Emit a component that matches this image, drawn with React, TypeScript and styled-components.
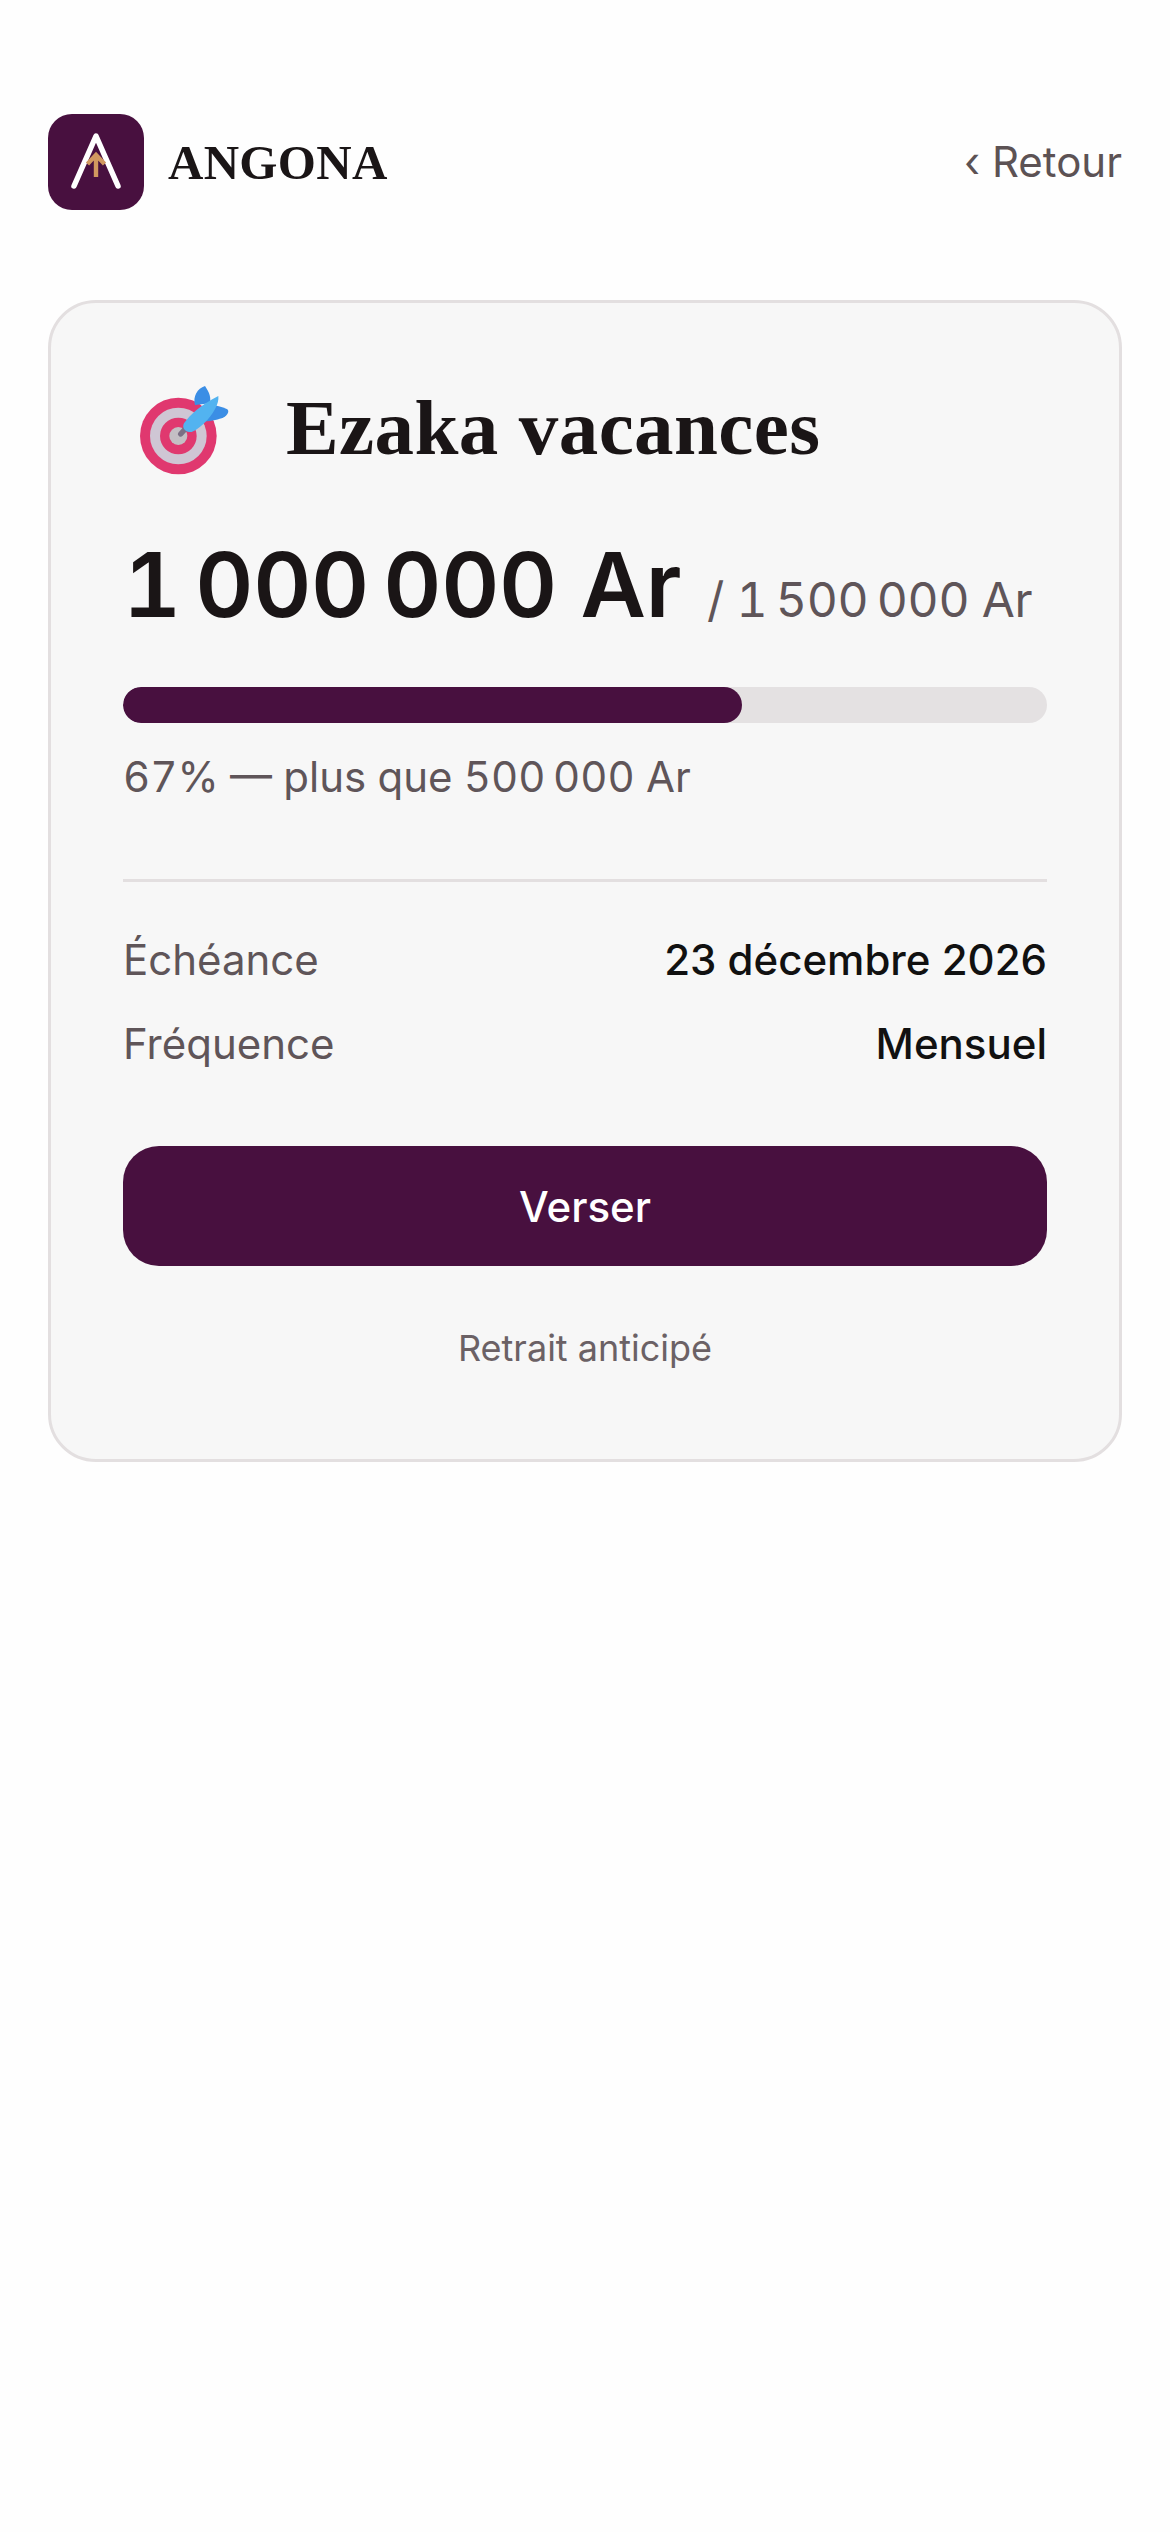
import styled, { createGlobalStyle } from "styled-components";

const NNBSP = "\u202f";

const GlobalStyle = createGlobalStyle`
  html, body {
    margin: 0;
    padding: 0;
    background: #fefefe;
  }
  body {
    font-family: Inter, "Liberation Sans", sans-serif;
    color: #1a1516;
  }
`;

const Logo = () => (
  <LogoBox>
    <svg width="96" height="96" viewBox="0 0 96 96" fill="none">
      <path d="M26 72 L48 22 L70 72" stroke="#fff" strokeWidth="5.5" strokeLinecap="round" strokeLinejoin="round" />
      <path d="M48 63 V41 M39.5 50 L48 41 L56.5 50" stroke="#d1985f" strokeWidth="4.4" />
    </svg>
  </LogoBox>
);

const TargetIcon = () => (
  <svg width="115" height="106" viewBox="39 45 345 318">
    <circle cx="205" cy="228" r="115" fill="#e0386f" />
    <circle cx="205" cy="228" r="85" fill="#cfc6d4" />
    <circle cx="205" cy="228" r="55" fill="#e0386f" />
    <circle cx="205" cy="228" r="27" fill="#c4bfc4" />
    <path d="M212 222 L245 185" stroke="#7b7085" strokeWidth="16" strokeLinecap="round" />
    <path d="M255 135 C248 110 262 85 285 78 C292 90 305 105 300 130 Z" fill="#3b8ee5" />
    <path d="M270 185 C300 185 320 180 335 175 C350 170 360 155 352 148 C335 140 318 135 300 135 Z" fill="#3b8ee5" />
    <path d="M222 190 C240 165 270 135 325 108 C328 130 310 165 280 192 C265 205 250 218 238 216 C225 215 215 203 222 190 Z" fill="#52b3f0" />
  </svg>
);

const App = () => {
  return (
    <Page>
      <GlobalStyle />
      <Header>
        <Brand>
          <Logo />
          <BrandName>ANGONA</BrandName>
        </Brand>
        <BackLink>‹ Retour</BackLink>
      </Header>
      <Card>
        <TitleRow>
          <TargetIcon />
          <Title>Ezaka vacances</Title>
        </TitleRow>
        <Amounts>
          <Amount>1{NNBSP}000{NNBSP}000 Ar</Amount>
          <Goal>/ 1{NNBSP}500{NNBSP}000 Ar</Goal>
        </Amounts>
        <Track>
          <Fill style={{ width: "67%" }} />
        </Track>
        <Remaining>67% — plus que 500{NNBSP}000 Ar</Remaining>
        <Divider />
        <InfoRow>
          <InfoLabel>Échéance</InfoLabel>
          <InfoValue>23 décembre 2026</InfoValue>
        </InfoRow>
        <InfoRow>
          <InfoLabel>Fréquence</InfoLabel>
          <InfoValue>Mensuel</InfoValue>
        </InfoRow>
        <PayButton>Verser</PayButton>
        <Withdraw>Retrait anticipé</Withdraw>
      </Card>
    </Page>
  );
};

const Page = styled.div`
  min-height: 2532px;
  box-sizing: border-box;
  padding: 114px 48px 0;
`;

const Header = styled.header`
  display: flex;
  align-items: center;
  justify-content: space-between;
  height: 96px;
`;

const Brand = styled.div`
  display: flex;
  align-items: center;
  gap: 24px;
`;

const LogoBox = styled.div`
  width: 96px;
  height: 96px;
  border-radius: 24px;
  background: #48103f;
  svg {
    display: block;
  }
`;

const BrandName = styled.div`
  font-family: "Liberation Serif", serif;
  font-weight: 700;
  font-size: 49px;
  letter-spacing: 0.3px;
  color: #1a1516;
`;

const BackLink = styled.div`
  padding-bottom: 2px;
  font-size: 42px;
  color: #5c5254;
`;

const Card = styled.section`
  box-sizing: border-box;
  margin-top: 90px;
  padding: 72px 72px 89px;
  background: #f7f7f7;
  border: 3px solid #e3dfe0;
  border-radius: 48px;
`;

const TitleRow = styled.div`
  display: flex;
  align-items: center;
  gap: 48px;
  height: 106px;
  svg {
    display: block;
    flex: none;
  }
`;

const Title = styled.h1`
  margin: 0;
  font-family: "Liberation Serif", serif;
  font-weight: 700;
  font-size: 79px;
  letter-spacing: 0.4px;
  color: #1a1516;
`;

const Amounts = styled.div`
  display: flex;
  align-items: baseline;
  gap: 26px;
  margin-top: 49px;
  white-space: nowrap;
  font-variant-numeric: tabular-nums;
`;

const Amount = styled.div`
  font-size: 90px;
  line-height: 110px;
  letter-spacing: -0.4px;
  font-weight: 600;
  color: #1a1516;
`;

const Goal = styled.div`
  font-size: 48px;
  letter-spacing: -0.3px;
  color: #5f5559;
`;

const Track = styled.div`
  height: 36px;
  margin-top: 47px;
  border-radius: 18px;
  background: #e4e1e2;
  overflow: hidden;
`;

const Fill = styled.div`
  height: 100%;
  border-radius: 18px;
  background: #48103f;
`;

const Remaining = styled.div`
  margin-top: 28px;
  font-size: 42px;
  line-height: 51px;
  color: #5f5559;
  font-variant-numeric: tabular-nums;
`;

const Divider = styled.hr`
  margin: 77px 0 0;
  border: 0;
  border-top: 3px solid #e3dfe0;
`;

const InfoRow = styled.div`
  display: flex;
  justify-content: space-between;
  align-items: center;
  margin-top: 33px;
  font-size: 42px;
  line-height: 51px;

  hr + & {
    margin-top: 52px;
  }
`;

const InfoLabel = styled.div`
  color: #5f5559;
`;

const InfoValue = styled.div`
  font-weight: 500;
  color: #111;
`;

const PayButton = styled.button`
  display: block;
  width: 100%;
  height: 120px;
  margin-top: 77px;
  border: 0;
  border-radius: 36px;
  background: #48103f;
  color: #fff;
  font-family: inherit;
  font-size: 42px;
  font-weight: 500;
`;

const Withdraw = styled.div`
  margin-top: 60px;
  text-align: center;
  font-size: 36px;
  line-height: 44px;
  color: #6b6165;
`;

export default App;
